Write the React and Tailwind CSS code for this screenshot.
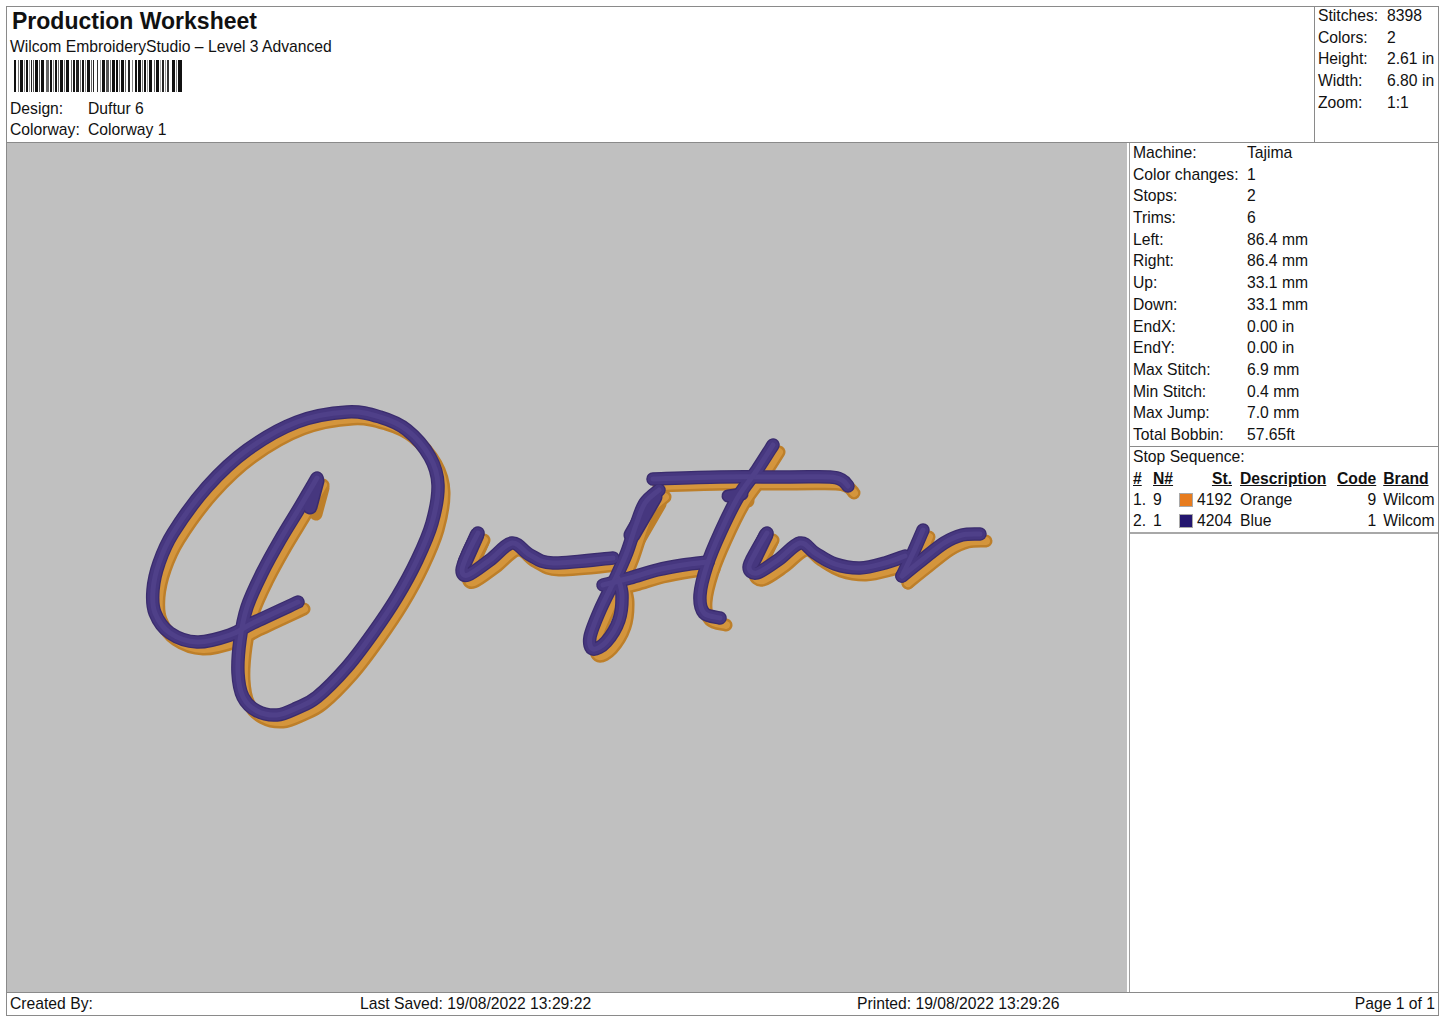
import React from 'react';

const font = "font-['Liberation_Sans',Arial,sans-serif]";

const machineRows = [
  ['Machine:', 'Tajima'],
  ['Color changes:', '1'],
  ['Stops:', '2'],
  ['Trims:', '6'],
  ['Left:', '86.4 mm'],
  ['Right:', '86.4 mm'],
  ['Up:', '33.1 mm'],
  ['Down:', '33.1 mm'],
  ['EndX:', '0.00 in'],
  ['EndY:', '0.00 in'],
  ['Max Stitch:', '6.9 mm'],
  ['Min Stitch:', '0.4 mm'],
  ['Max Jump:', '7.0 mm'],
  ['Total Bobbin:', '57.65ft'],
];

const summaryRows = [
  ['Stitches:', '8398'],
  ['Colors:', '2'],
  ['Height:', '2.61 in'],
  ['Width:', '6.80 in'],
  ['Zoom:', '1:1'],
];

// x, width, shade
const bars = [
  [14, 2, '#111'], [18, 1, '#777'], [20, 3, '#111'], [24, 1, '#888'], [26, 2, '#111'], [29, 1, '#999'], [31, 1, '#222'],
  [33, 1, '#555'], [35, 3, '#111'], [39, 1, '#555'], [41, 3, '#111'], [46, 3, '#666'], [50, 2, '#111'], [53, 1, '#888'],
  [55, 2, '#111'], [58, 1, '#666'], [60, 3, '#111'], [64, 1, '#777'], [66, 3, '#111'], [71, 1, '#666'], [73, 2, '#111'],
  [76, 3, '#222'], [80, 1, '#777'], [82, 2, '#111'], [85, 1, '#888'], [87, 3, '#111'], [91, 1, '#666'], [93, 1, '#222'],
  [97, 1, '#333'], [100, 1, '#999'], [102, 3, '#111'], [106, 3, '#555'], [110, 1, '#777'], [112, 3, '#111'], [116, 2, '#111'],
  [119, 1, '#777'], [121, 3, '#111'], [125, 1, '#666'], [128, 2, '#222'], [132, 1, '#888'], [135, 2, '#111'], [138, 3, '#111'],
  [142, 1, '#777'], [144, 2, '#111'], [147, 1, '#999'], [149, 3, '#111'], [154, 1, '#666'], [156, 3, '#111'], [160, 1, '#aaa'],
  [162, 2, '#222'], [165, 1, '#999'], [167, 2, '#333'], [172, 3, '#111'], [176, 1, '#888'], [178, 4, '#111'],
];

// centre lines of the stitched lettering, in page pixels
const threads = [
  // D
  [[298, 602], [253, 623], [230, 635], [197, 642], [170, 633], [155, 613], [153, 590], [159, 563], [173, 533], [207, 487], [247, 450], [297, 422], [347, 412], [380, 417], [407, 430], [430, 457], [438, 485], [432, 523], [417, 560], [397, 597], [373, 633], [347, 667], [317, 697], [297, 708], [277, 715], [257, 711], [243, 697], [238, 673], [240, 640], [247, 607], [262, 573], [280, 540], [300, 507], [317, 478]],
  // u
  [[478, 533], [468, 553], [462, 570], [468, 575], [490, 560], [512, 543], [530, 555], [553, 563], [613, 558]],
  // f
  [[659, 490], [645, 503], [636, 525], [627, 552], [617, 575], [600, 610], [590, 637], [593, 649], [606, 642], [619, 620], [622, 595], [618, 578]],
  [[603, 585], [630, 578], [657, 570], [683, 565], [708, 562]],
  [[653, 479], [720, 477], [790, 477], [830, 477], [842, 480], [848, 486]],
  // t
  [[773, 445], [757, 470], [738, 497], [720, 533], [707, 565], [700, 595], [704, 613], [720, 618]],
  // u, r
  [[767, 533], [757, 550], [749, 567], [757, 573], [778, 560], [800, 543], [815, 553], [835, 564], [860, 568], [885, 563], [905, 556]],
  [[923, 530], [913, 553], [902, 576]],
  [[902, 576], [922, 560], [944, 543], [962, 535], [980, 534]],
];

const toPath = (pts) => {
  let d = `M${pts[0][0]} ${pts[0][1]}`;
  for (let i = 0; i < pts.length - 1; i++) {
    const p0 = pts[i - 1] || pts[i];
    const p1 = pts[i];
    const p2 = pts[i + 1];
    const p3 = pts[i + 2] || p2;
    const c1 = [p1[0] + (p2[0] - p0[0]) / 6, p1[1] + (p2[1] - p0[1]) / 6];
    const c2 = [p2[0] - (p3[0] - p1[0]) / 6, p2[1] - (p3[1] - p1[1]) / 6];
    d += ` C${c1[0]} ${c1[1]} ${c2[0]} ${c2[1]} ${p2[0]} ${p2[1]}`;
  }
  return d;
};

const strokes = threads.map(toPath);

// thick parts that the plain centre lines don't give
const nubs = ['M317 481 L310 507', 'M728 496 L742 494', 'M654 497 L632 535', 'M477 535 L465 562', 'M766 535 L753 562'];
const nubWidths = [15, 13, 17, 15, 15];

const Lettering = () => (
  <svg viewBox="7 143 1120 849" className="w-full h-full block" fill="none" strokeLinecap="round" strokeLinejoin="round">
    <g transform="translate(6 7)">
      {strokes.map((d) => (
        <path key={d} d={d} stroke="#bd7f2a" strokeWidth="13" />
      ))}
      {nubs.map((d) => (
        <path key={d} d={d} stroke="#bd7f2a" strokeWidth="13" />
      ))}
      {strokes.map((d) => (
        <path key={d} d={d} stroke="#d4953c" strokeWidth="8" />
      ))}
    </g>
    {strokes.map((d) => (
      <path key={d} d={d} stroke="#3a2c6d" strokeWidth="13.5" />
    ))}
    {nubs.map((d, i) => (
      <path key={d} d={d} stroke="#3a2c6d" strokeWidth={nubWidths[i]} />
    ))}
    {strokes.map((d) => (
      <path key={d} d={d} stroke="#46377f" strokeWidth="11" />
    ))}
    {nubs.map((d, i) => (
      <path key={d} d={d} stroke="#46377f" strokeWidth={nubWidths[i] - 3} />
    ))}
    {strokes.map((d) => (
      <path key={d} d={d} stroke="#4f4089" strokeWidth="5" />
    ))}
  </svg>
);

const App = () => {
  return (
    <div className={`${font} w-[1445px] h-[1021px] bg-white text-[#111] text-[15.7px] pl-[6px] pr-[6px] pt-[6px] pb-[5px]`}>
      <div className="h-full border border-[#8a8a8a] flex flex-col">
        {/* Header */}
        <div className="h-[136px] flex border-b border-[#8a8a8a]">
          <div className="flex-1 pl-[3px]">
            <h1 className="text-[23px] font-bold leading-[28px] pl-[2px]">Production Worksheet</h1>
            <p className="leading-[22px] mt-[1px]">Wilcom EmbroideryStudio – Level 3 Advanced</p>
            <svg width="176" height="34" viewBox="10 59 176 34" className="block mt-[1px]">
              {bars.map(([x, w, c]) => (
                <rect key={x} x={x} y="60" width={w} height="32" fill={c} />
              ))}
            </svg>
            <div className="mt-[5px] grid grid-cols-[78px_1fr] leading-[21px]">
              <span>Design:</span>
              <span>Duftur 6</span>
              <span>Colorway:</span>
              <span>Colorway 1</span>
            </div>
          </div>
          <div className="w-[124px] border-l border-[#8a8a8a] pl-[3px] grid grid-cols-[69px_1fr] auto-rows-[21.7px] leading-[18px] content-start whitespace-nowrap">
            {summaryRows.map(([label, value]) => (
              <React.Fragment key={label}>
                <span>{label}</span>
                <span>{value}</span>
              </React.Fragment>
            ))}
          </div>
        </div>

        {/* Body */}
        <div className="flex-1 flex min-h-0">
          <div className="w-[1120px] bg-[#c0c0c0]">
            <Lettering />
          </div>
          <div className="flex-1 ml-[2px] border-l border-[#a0a0a0] flex flex-col">
            <div className="pl-[3px] h-[304px] grid grid-cols-[114px_1fr] auto-rows-[21.7px] leading-[19px] border-b border-[#8a8a8a]">
              {machineRows.map(([label, value]) => (
                <React.Fragment key={label}>
                  <span>{label}</span>
                  <span>{value}</span>
                </React.Fragment>
              ))}
            </div>
            <div className="border-b-2 border-[#a8a8a8] h-[87px]">
              <p className="pl-[3px] leading-[19px]">Stop Sequence:</p>
              <table className="mt-[2px] border-collapse leading-[21px]">
                <thead>
                  <tr className="font-bold [&_span]:underline">
                    <th className="w-[23px] pl-[3px] text-left font-bold"><span>#</span></th>
                    <th className="w-[44px] text-left font-bold"><span>N#</span></th>
                    <th className="w-[35px] text-right font-bold"><span>St.</span></th>
                    <th className="w-[105px] pl-[8px] text-left font-bold"><span>Description</span></th>
                    <th className="w-[39px] text-right font-bold"><span>Code</span></th>
                    <th className="pl-[7px] text-left font-bold"><span>Brand</span></th>
                  </tr>
                </thead>
                <tbody>
                  <tr>
                    <td className="pl-[3px]">1.</td>
                    <td>
                      <div className="flex items-center justify-between">9<span className="w-[14px] h-[14px] bg-[#e77c1f] border border-[#a8a8a8] mr-[4px]" /></div>
                    </td>
                    <td className="text-right">4192</td>
                    <td className="pl-[8px]">Orange</td>
                    <td className="text-right">9</td>
                    <td className="pl-[7px]">Wilcom</td>
                  </tr>
                  <tr>
                    <td className="pl-[3px]">2.</td>
                    <td>
                      <div className="flex items-center justify-between">1<span className="w-[14px] h-[14px] bg-[#24166f] border border-[#a8a8a8] mr-[4px]" /></div>
                    </td>
                    <td className="text-right">4204</td>
                    <td className="pl-[8px]">Blue</td>
                    <td className="text-right">1</td>
                    <td className="pl-[7px]">Wilcom</td>
                  </tr>
                </tbody>
              </table>
            </div>
          </div>
        </div>

        {/* Footer */}
        <div className="h-[23px] border-t border-[#8a8a8a] leading-[21px] px-[3px] grid grid-cols-[350px_497px_1fr_auto] whitespace-nowrap">
          <span>Created By:</span>
          <span>Last Saved: 19/08/2022 13:29:22</span>
          <span>Printed: 19/08/2022 13:29:26</span>
          <span>Page 1 of 1</span>
        </div>
      </div>
    </div>
  );
};

export default App;
